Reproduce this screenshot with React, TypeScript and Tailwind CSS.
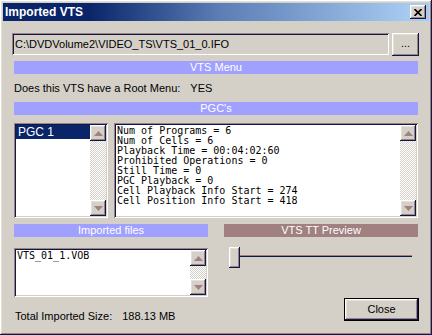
import React from "react";

const raised =
  "shadow-[inset_-1px_-1px_#0a1a4a,inset_1px_1px_#ffffff,inset_-2px_-2px_#a08080,inset_2px_2px_#e4e0d8]";
const sunken =
  "shadow-[inset_1px_1px_#a08080,inset_-1px_-1px_#ffffff,inset_2px_2px_#0a1a4a,inset_-2px_-2px_#d4d0c8]";

function Arrow({ up }: { up?: boolean }) {
  return (
    <div className={`w-[16px] h-[16px] bg-[#d4d0c8] flex items-center justify-center ${raised}`}>
      <svg width="9" height="5" viewBox="0 0 9 5">
        {up ? <path d="M4.5 0 L9 5 L0 5 Z" fill="#a08080" /> : <path d="M0 0 L9 0 L4.5 5 Z" fill="#a08080" />}
      </svg>
    </div>
  );
}

function ScrollBar() {
  return (
    <div className="w-[16px] h-full flex flex-col">
      <Arrow up />
      <div className="flex-1 bg-[image:repeating-conic-gradient(#ffffff_0_25%,#d4d0c8_0_50%)] bg-[length:2px_2px]" />
      <Arrow />
    </div>
  );
}

function Bar({ label, color }: { label: string; color: string }) {
  return (
    <div className={`h-[13px] flex items-center justify-center text-white text-[11px] leading-none ${color}`}>
      {label}
    </div>
  );
}

const info = [
  "Num of Programs = 6",
  "Num of Cells = 6",
  "Playback Time = 00:04:02:60",
  "Prohibited Operations = 0",
  "Still Time = 0",
  "PGC Playback = 0",
  "Cell Playback Info Start = 274",
  "Cell Position Info Start = 418",
];

export default function App() {
  return (
    <div
      className={`w-[432px] h-[335px] bg-[#d4d0c8] text-black text-[11px] font-['Liberation_Sans',Arial,sans-serif] ${raised}`}
    >
      {/* Title bar */}
      <div className="pt-[3px] px-[3px]">
        <div className="h-[18px] flex items-center justify-between pl-[2px] pr-[3px] bg-gradient-to-r from-[#0a246a] from-20% via-[#5a7cb4] via-50% to-[#a6caf0] to-95%">
          <span className="text-white font-bold text-[12px]">Imported VTS</span>
          <div className={`w-[16px] h-[14px] bg-[#d4d0c8] flex items-center justify-center ${raised}`}>
            <svg width="8" height="7" viewBox="0 0 8 7">
              <path d="M0.5 0 L7.5 7 M7.5 0 L0.5 7" stroke="#000" strokeWidth="1.6" />
            </svg>
          </div>
        </div>
      </div>

      {/* Path */}
      <div className="mt-[12px] ml-[12px] flex gap-[3px]">
        <div className={`w-[377px] h-[22px] flex items-center pl-[3px] bg-[#d4d0c8] ${sunken}`}>
          C:\DVDVolume2\VIDEO_TS\VTS_01_0.IFO
        </div>
        <div className={`w-[27px] h-[23px] flex items-center justify-center pb-[3px] ${raised}`}>...</div>
      </div>

      <div className="ml-[14px] w-[404px]">
        <div className="mt-[5px]">
          <Bar label="VTS Menu" color="bg-[#a0a0ff]" />
        </div>
        <div className="mt-[7px] h-[14px] flex items-center">
          <span>Does this VTS have a Root Menu:</span>
          <span className="ml-[10px]">YES</span>
        </div>
        <div className="mt-[7px]">
          <Bar label="PGC's" color="bg-[#a0a0ff]" />
        </div>

        {/* PGC lists */}
        <div className="mt-[8px] flex gap-[6px] h-[95px]">
          <div className={`w-[94px] h-full bg-white p-[2px] flex ${sunken}`}>
            <div className="flex-1">
              <div className="h-[14px] bg-[#0a246a] text-white flex items-center pl-[2px] text-[12px]">PGC 1</div>
            </div>
            <ScrollBar />
          </div>
          <div className={`flex-1 h-full bg-white p-[2px] flex ${sunken}`}>
            <div className="flex-1 pl-[1px] pt-[1px] font-['DejaVu_Sans_Mono',monospace] text-[10px] leading-[10px]">
              {info.map((l) => (
                <div key={l} className="whitespace-pre">
                  {l}
                </div>
              ))}
            </div>
            <ScrollBar />
          </div>
        </div>

        {/* Bottom */}
        <div className="mt-[6px] grid grid-cols-2 gap-[16px]">
          <div>
            <Bar label="Imported files" color="bg-[#a0a0ff]" />
            <div className={`mt-[11px] h-[49px] bg-white p-[2px] flex ${sunken}`}>
              <div className="flex-1 pl-[1px] pt-[1px] font-['DejaVu_Sans_Mono',monospace] text-[10px] leading-[10px]">
                VTS_01_1.VOB
              </div>
              <ScrollBar />
            </div>
            <div className="mt-[11px] ml-[1px] flex">
              <span>Total Imported Size:</span>
              <span className="ml-[10px]">188.13 MB</span>
            </div>
          </div>
          <div>
            <Bar label="VTS TT Preview" color="bg-[#a08080]" />
            <div className="mt-[10px] ml-[5px] relative h-[21px] w-[183px]">
              <div className="absolute left-0 right-0 top-[8px] h-[4px] border-t border-l border-[#a08080] border-b-white border-r-white shadow-[inset_1px_1px_#0a1a4a]" />
              <div className={`absolute left-0 top-0 w-[11px] h-[21px] bg-[#d4d0c8] ${raised}`} />
            </div>
            <div className="mt-[30px] flex justify-end -mr-[1px]">
              <div className="w-[75px] h-[23px] border border-black flex">
                <div className={`flex-1 flex items-center justify-center ${raised}`}>Close</div>
              </div>
            </div>
          </div>
        </div>
      </div>
    </div>
  );
}
